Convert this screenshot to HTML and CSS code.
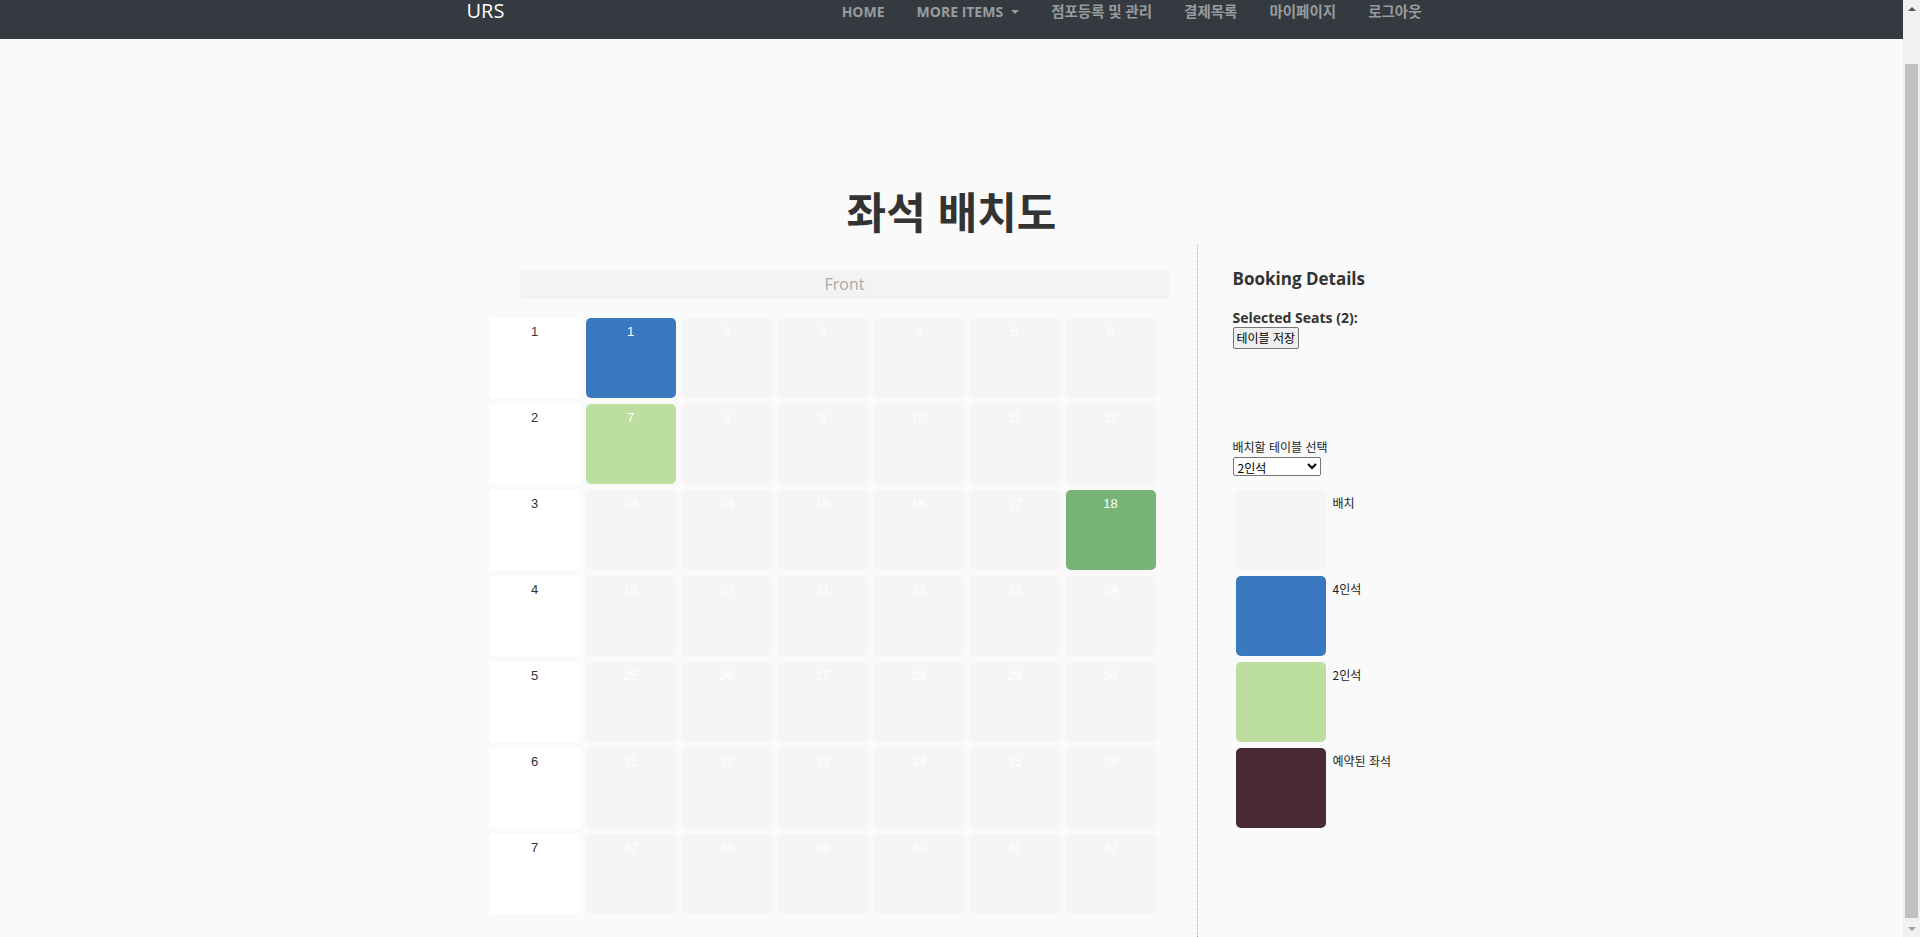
FILE: index.html
```html
<!DOCTYPE html>
<html lang="ko">
<head>
<meta charset="utf-8">
<title>좌석 배치도</title>
<link rel="stylesheet" href="styles.css">
</head>
<body>
<header class="navbar">
  <div class="nav-inner">
    <a class="brand" href="#">URS</a>
    <ul class="nav-links">
      <li><a class="nav-link" href="#">Home</a></li>
      <li><a class="nav-link" href="#">More Items<span class="caret"></span></a></li>
      <li><a class="nav-link nav-link-ko" href="#">점포등록 및 관리</a></li>
      <li><a class="nav-link nav-link-ko" href="#">결제목록</a></li>
      <li><a class="nav-link nav-link-ko" href="#">마이페이지</a></li>
      <li><a class="nav-link nav-link-ko" href="#">로그아웃</a></li>
    </ul>
  </div>
</header>

<main class="container">
  <h1 class="page-title">좌석 배치도</h1>
  <div class="layout">
    <section class="seat-area">
      <div class="front">Front</div>
      <div class="seat-grid">
        <div class="seat-row">
          <div class="cell row-label">1</div>
          <div class="cell seat seat-four">1</div>
          <div class="cell seat">2</div>
          <div class="cell seat">3</div>
          <div class="cell seat">4</div>
          <div class="cell seat">5</div>
          <div class="cell seat">6</div>
        </div>
        <div class="seat-row">
          <div class="cell row-label">2</div>
          <div class="cell seat seat-two">7</div>
          <div class="cell seat">8</div>
          <div class="cell seat">9</div>
          <div class="cell seat">10</div>
          <div class="cell seat">11</div>
          <div class="cell seat">12</div>
        </div>
        <div class="seat-row">
          <div class="cell row-label">3</div>
          <div class="cell seat">13</div>
          <div class="cell seat">14</div>
          <div class="cell seat">15</div>
          <div class="cell seat">16</div>
          <div class="cell seat">17</div>
          <div class="cell seat seat-selected">18</div>
        </div>
        <div class="seat-row">
          <div class="cell row-label">4</div>
          <div class="cell seat">19</div>
          <div class="cell seat">20</div>
          <div class="cell seat">21</div>
          <div class="cell seat">22</div>
          <div class="cell seat">23</div>
          <div class="cell seat">24</div>
        </div>
        <div class="seat-row">
          <div class="cell row-label">5</div>
          <div class="cell seat">25</div>
          <div class="cell seat">26</div>
          <div class="cell seat">27</div>
          <div class="cell seat">28</div>
          <div class="cell seat">29</div>
          <div class="cell seat">30</div>
        </div>
        <div class="seat-row">
          <div class="cell row-label">6</div>
          <div class="cell seat">31</div>
          <div class="cell seat">32</div>
          <div class="cell seat">33</div>
          <div class="cell seat">34</div>
          <div class="cell seat">35</div>
          <div class="cell seat">36</div>
        </div>
        <div class="seat-row">
          <div class="cell row-label">7</div>
          <div class="cell seat">37</div>
          <div class="cell seat">38</div>
          <div class="cell seat">39</div>
          <div class="cell seat">40</div>
          <div class="cell seat">41</div>
          <div class="cell seat">42</div>
        </div>
      </div>
    </section>

    <aside class="details">
      <h3 class="details-title">Booking Details</h3>
      <p class="selected-title">Selected Seats (2):</p>
      <button class="save-btn" type="button">테이블 저장</button>

      <label class="select-label" for="tableType">배치할 테이블 선택</label>
      <select class="table-select" id="tableType">
        <option>2인석</option>
        <option>4인석</option>
      </select>

      <ul class="legend">
        <li class="legend-item"><span class="cell swatch"></span><span class="legend-text">배치</span></li>
        <li class="legend-item"><span class="cell swatch seat-four"></span><span class="legend-text">4인석</span></li>
        <li class="legend-item"><span class="cell swatch seat-two"></span><span class="legend-text">2인석</span></li>
        <li class="legend-item"><span class="cell swatch seat-booked"></span><span class="legend-text">예약된 좌석</span></li>
      </ul>
    </aside>
  </div>
</main>

<div class="scrollbar" aria-hidden="true">
  <span class="sb-arrow sb-up"></span>
  <span class="sb-thumb"></span>
  <span class="sb-arrow sb-down"></span>
</div>
</body>
</html>
```

FILE: styles.css
```css
* {
  box-sizing: border-box;
}

body {
  margin: 0;
  padding-right: 17px;
  background: #fafafa;
  color: #333;
  font-family: "Open Sans", "Noto Sans CJK KR", sans-serif;
}

/* ---------- navbar ---------- */
.navbar {
  background: #343a40;
  height: 39px;
}

.nav-inner {
  width: 1000px;
  margin: 0 auto;
  padding: 0 15px;
  display: flex;
  justify-content: space-between;
  align-items: flex-start;
}

.brand {
  color: #fff;
  font-size: 20px;
  line-height: 22px;
  text-decoration: none;
}

.nav-links {
  list-style: none;
  margin: 0;
  padding: 0;
  display: flex;
}

.nav-link {
  display: block;
  padding: 2px 16px 0;
  font-size: 14px;
  line-height: 20px;
  font-weight: 700;
  color: #999c9f;
  text-transform: uppercase;
  text-decoration: none;
  font-family: "Open Sans", "Noto Sans CJK KR", sans-serif;
}

.nav-link-ko {
  font-size: 14.5px;
}

.nav-links li:last-child .nav-link {
  padding-right: 15px;
}

.caret {
  display: inline-block;
  margin-left: 8px;
  vertical-align: 3px;
  border-top: 4px solid #999c9f;
  border-left: 4px solid transparent;
  border-right: 4px solid transparent;
}

/* ---------- main ---------- */
.container {
  width: 1000px;
  margin: 0 auto;
  padding: 0 15px;
}

.page-title {
  margin: 147px 0 10px;
  text-align: center;
  font-family: "Noto Sans CJK KR", sans-serif;
  font-size: 43px;
  line-height: 48px;
  font-weight: 700;
  color: #333;
}

.layout {
  display: flex;
  min-height: 693px;
}

.seat-area {
  flex: 0 0 730px;
  padding: 26px 0 0 20px;
}

.front {
  margin: 0 0 16px 33px;
  width: 650px;
  height: 29px;
  line-height: 29px;
  background: #f3f3f3;
  border-radius: 4px;
  text-align: center;
  color: #aaa;
  font-size: 16px;
}

.seat-row {
  display: flex;
}

.cell {
  display: block;
  width: 90px;
  height: 80px;
  margin: 3px;
  padding-top: 6px;
  text-align: center;
  font-family: "Liberation Sans", Arial, sans-serif;
  font-size: 13px;
  line-height: 16px;
  color: #fff;
  background: #f5f5f5;
  border-radius: 5px;
}

.row-label {
  background: #fff;
  color: #333;
  border-radius: 0;
}

.seat-four {
  background: #3a78c2;
}

.seat-two {
  background: #bcdfa0;
}

.seat-selected {
  background: #77b475;
}

.seat-booked {
  background: #4a2a33;
}

/* ---------- details ---------- */
.details {
  flex: 1;
  border-left: 1px dotted #aaa;
  padding: 23px 0 0 35px;
}

.details-title {
  margin: 0;
  font-size: 17px;
  line-height: 24px;
  font-weight: 700;
}

.selected-title {
  margin: 17px 0 0;
  font-size: 14px;
  line-height: 19px;
  font-weight: 700;
}

.save-btn {
  display: block;
  margin: 0;
  padding: 1px 3px;
  height: 22px;
  font-family: "Noto Sans CJK KR", sans-serif;
  font-size: 12px;
  line-height: 18px;
  color: #000;
  background: #efefef;
  border: 1px solid #767676;
  border-radius: 2px;
}

.select-label {
  display: block;
  margin-top: 89px;
  font-family: "Noto Sans CJK KR", sans-serif;
  font-size: 12px;
  line-height: 17px;
  color: #222;
}

.table-select {
  display: block;
  margin: 2px 0 0;
  width: 88px;
  height: 19px;
  font-family: "Noto Sans CJK KR", sans-serif;
  font-size: 12px;
  color: #000;
  background: #fff;
  border: 1px solid #767676;
  border-radius: 2px;
}

.legend {
  list-style: none;
  margin: 11px 0 0;
  padding: 0;
}

.legend-item {
  display: flex;
  align-items: flex-start;
}

.swatch {
  flex: 0 0 90px;
}

.legend-text {
  margin-left: 4px;
  padding-top: 7px;
  font-family: "Noto Sans CJK KR", sans-serif;
  font-size: 12px;
  line-height: 17px;
  color: #222;
}

/* ---------- window scrollbar (as captured) ---------- */
.scrollbar {
  position: fixed;
  top: 0;
  right: 0;
  width: 17px;
  height: 100%;
  background: #f1f1f1;
  display: flex;
  flex-direction: column;
  align-items: center;
}

.sb-arrow {
  flex: 0 0 17px;
  width: 17px;
  display: flex;
  align-items: center;
  justify-content: center;
}

.sb-arrow::before {
  content: "";
  border-left: 4px solid transparent;
  border-right: 4px solid transparent;
}

.sb-up::before {
  border-bottom: 4px solid #505050;
}

.sb-down {
  margin-top: auto;
}

.sb-down::before {
  border-top: 4px solid #a3a3a3;
}

.sb-thumb {
  margin-top: 47px;
  width: 13px;
  height: 854px;
  background: #c1c1c1;
}
```
